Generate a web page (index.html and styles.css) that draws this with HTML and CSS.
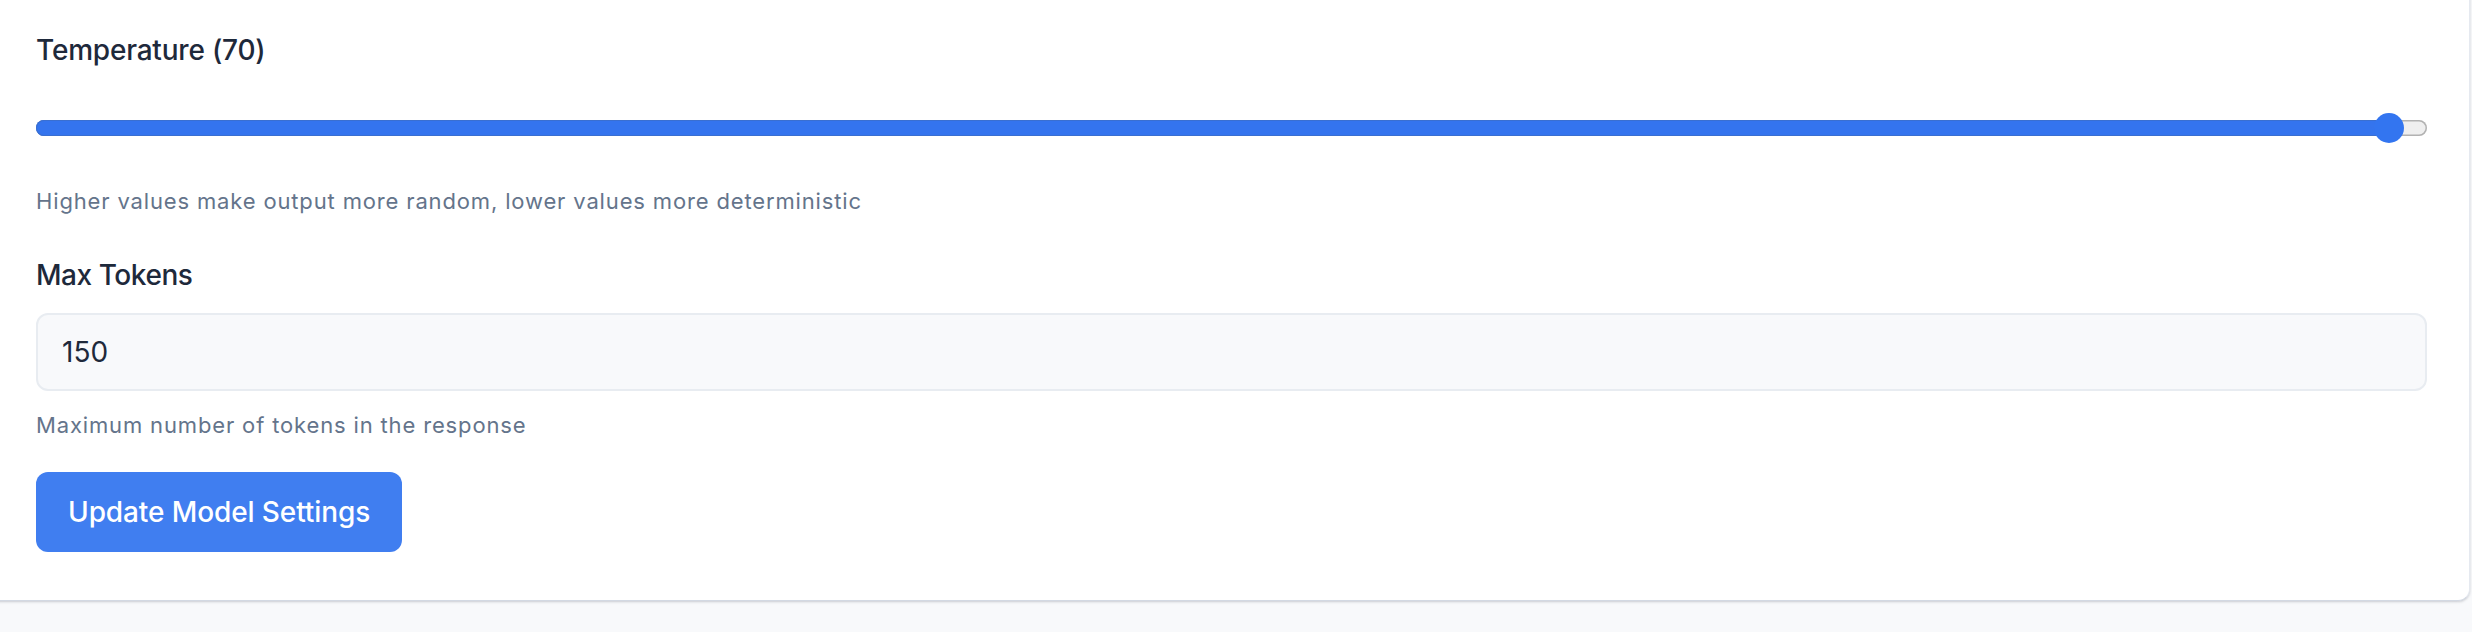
FILE: index.html
```html
<!DOCTYPE html>
<html lang="en">
<head>
<meta charset="utf-8">
<title>Model Settings</title>
<link rel="stylesheet" href="styles.css">
</head>
<body>
  <div class="page">
    <section class="card">
      <div class="field">
        <label class="label">Temperature (70)</label>
        <div class="slider">
          <div class="slider-track">
            <div class="slider-fill" style="width: 2353px"></div>
            <div class="slider-thumb"></div>
          </div>
        </div>
        <p class="hint hint-temp">Higher values make output more random, lower values more deterministic</p>
      </div>
      <div class="field">
        <label class="label label-tokens">Max Tokens</label>
        <div class="input">150</div>
        <p class="hint hint-tokens">Maximum number of tokens in the response</p>
      </div>
      <button class="btn">Update Model Settings</button>
    </section>
  </div>
</body>
</html>
```
FILE: styles.css
```css
html, body {
  margin: 0;
  padding: 0;
  background: #f8f9fb;
  font-family: Inter, "Noto Sans", "Liberation Sans", sans-serif;
}

.page {
  padding-right: 2px;
  overflow: hidden;
  height: 632px;
}

.card {
  background: #ffffff;
  margin: -20px 0 0 -20px;
  padding: 50px 42px 48px 56px;
  border-radius: 0 0 12px 12px;
  border-right: 1px solid #e5e9f0;
  border-bottom: 1px solid #d3d9e3;
  box-shadow: 0 1px 3px rgba(15, 23, 42, 0.14), 0 1px 2px rgba(15, 23, 42, 0.06);
  display: flex;
  flex-direction: column;
  align-items: flex-start;
}

.field {
  display: flex;
  flex-direction: column;
  align-self: stretch;
}

.label {
  font-size: 28px;
  line-height: 40px;
  font-weight: 500;
  letter-spacing: -0.2px;
  color: #1e293b;
}

.label-tokens {
  margin-top: 38px;
  letter-spacing: -0.45px;
}

.slider {
  margin-top: 42px;
  height: 32px;
  display: flex;
  align-items: center;
}

.slider-track {
  position: relative;
  flex: 1;
  height: 16px;
  border-radius: 8px;
  background: #efefef;
  box-shadow: inset 0 0 0 1.5px #b2b2b2;
}

.slider-fill {
  height: 16px;
  border-radius: 8px;
  background: #3474ee;
  box-shadow: inset 0 0 0 1px #3a6fd0;
}

.slider-thumb {
  position: absolute;
  top: -7px;
  left: 2338px;
  width: 30px;
  height: 30px;
  border-radius: 50%;
  background: #3375f0;
}

.hint {
  margin: 0;
  font-size: 22px;
  line-height: 32px;
  letter-spacing: 0.85px;
  color: #64748b;
}

.hint-temp {
  margin-top: 41px;
}

.input {
  margin-top: 18px;
  height: 74px;
  box-sizing: content-box;
  border: 2px solid #e8ecf1;
  border-radius: 12px;
  background: #f8f9fb;
  padding: 0 24px;
  display: flex;
  align-items: center;
  font-size: 28px;
  color: #1e293b;
}

.hint-tokens {
  margin-top: 18px;
}

.btn {
  margin-top: 31px;
  height: 80px;
  padding: 0 32px;
  border: none;
  border-radius: 12px;
  background: #407ef0;
  color: #ffffff;
  font-family: inherit;
  font-size: 28px;
  font-weight: 500;
  letter-spacing: -0.1px;
  cursor: pointer;
}
```
